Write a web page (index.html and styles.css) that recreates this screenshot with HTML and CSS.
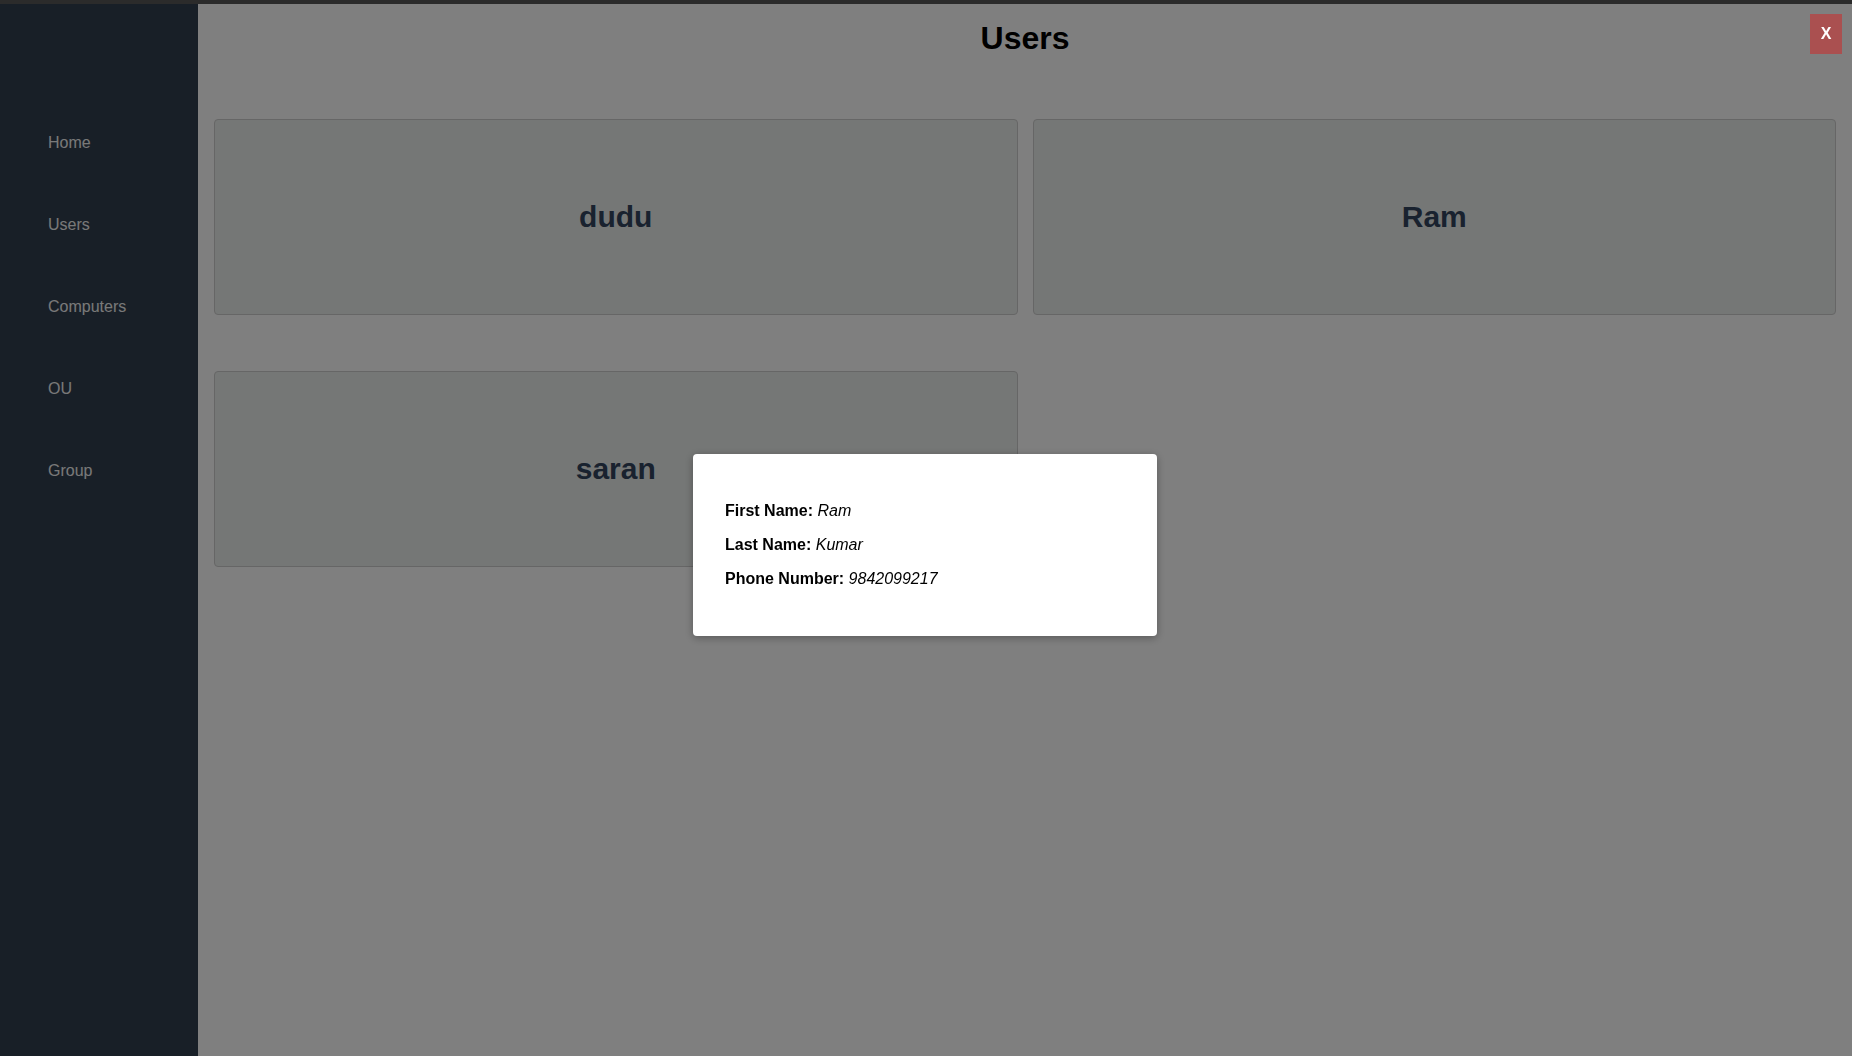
FILE: index.html
```html
<!DOCTYPE html>
<html lang="en">
<head>
<meta charset="utf-8">
<title>Users</title>
<link rel="stylesheet" href="styles.css">
</head>
<body>
<div class="topbar"></div>
<div class="layout">
  <aside class="sidebar">
    <nav class="nav">
      <a class="nav-item" href="#">Home</a>
      <a class="nav-item" href="#">Users</a>
      <a class="nav-item" href="#">Computers</a>
      <a class="nav-item" href="#">OU</a>
      <a class="nav-item" href="#">Group</a>
    </nav>
  </aside>
  <main class="main">
    <h1 class="page-title">Users</h1>
    <section class="cards">
      <div class="card"><h2 class="card-title">dudu</h2></div>
      <div class="card"><h2 class="card-title">Ram</h2></div>
      <div class="card"><h2 class="card-title">saran</h2></div>
    </section>
  </main>
</div>
<div class="overlay">
  <button class="close-btn" type="button">X</button>
  <div class="modal">
    <p class="field"><strong>First Name:</strong> <em>Ram</em></p>
    <p class="field"><strong>Last Name:</strong> <em>Kumar</em></p>
    <p class="field"><strong>Phone Number:</strong> <em>9842099217</em></p>
  </div>
</div>
</body>
</html>
```
FILE: styles.css
```css
html, body {
  margin: 0;
  padding: 0;
  height: 100%;
}
body {
  font-family: "Liberation Sans", Arial, sans-serif;
  background: #ffffff;
  overflow: hidden;
}
.topbar {
  height: 4px;
  background: #575757;
}
.layout {
  display: flex;
  height: calc(100vh - 4px);
}
.sidebar {
  width: 198px;
  flex: 0 0 198px;
  background: #303e4e;
  padding-top: 98px;
  box-sizing: border-box;
}
.nav {
  display: flex;
  flex-direction: column;
}
.nav-item {
  display: block;
  padding: 32px 48px;
  font-size: 16px;
  line-height: 18px;
  color: #f2f2f2;
  text-decoration: none;
}
.main {
  flex: 1;
  background: #ffffff;
}
.page-title {
  margin: 16px 0 0;
  font-size: 32px;
  line-height: 37px;
  font-weight: bold;
  text-align: center;
  color: #000000;
}
.cards {
  display: grid;
  grid-template-columns: 1fr 1fr;
  column-gap: 15px;
  row-gap: 56px;
  padding: 0 16px;
  margin-top: 62px;
}
.card {
  height: 196px;
  box-sizing: border-box;
  border: 1px solid #cccccc;
  border-radius: 4px;
  background: #ebeeec;
  display: flex;
  align-items: center;
  justify-content: center;
}
.card-title {
  margin: 0;
  font-size: 30px;
  font-weight: bold;
  color: #33455e;
}
.overlay {
  position: fixed;
  inset: 0;
  background: rgba(0, 0, 0, 0.5);
}
.close-btn {
  position: absolute;
  top: 14px;
  right: 10px;
  width: 32px;
  height: 40px;
  padding: 0;
  border: none;
  background: #aa5050;
  color: #ffffff;
  font-family: "Liberation Sans", Arial, sans-serif;
  font-size: 16px;
  font-weight: bold;
}
.modal {
  position: absolute;
  top: 454px;
  left: 693px;
  width: 464px;
  box-sizing: border-box;
  padding: 32px;
  background: #ffffff;
  border-radius: 4px;
  box-shadow: 0 2px 8px rgba(0, 0, 0, 0.3);
}
.field {
  margin: 16px 0;
  font-size: 16px;
  line-height: 18px;
  color: #000000;
}
```
